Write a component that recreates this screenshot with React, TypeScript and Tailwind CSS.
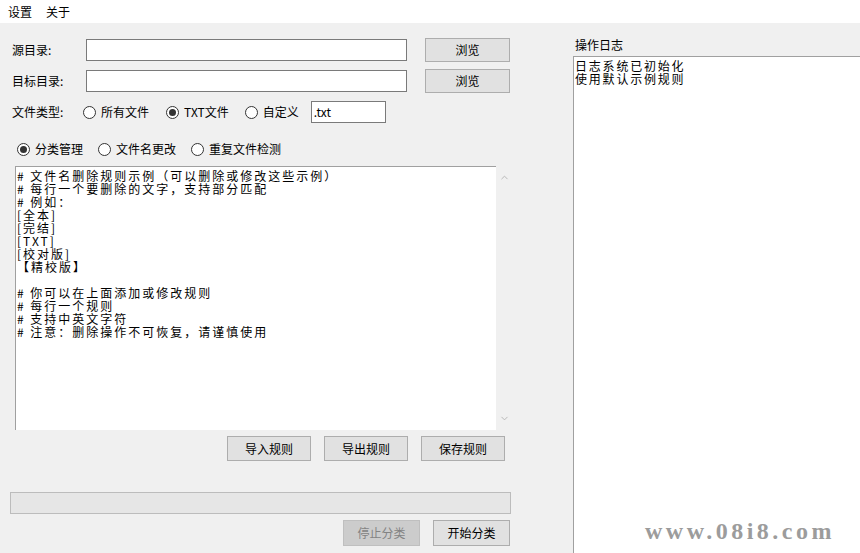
import { ChevronUp, ChevronDown } from "lucide-react";

const RULES = [
  "# 文件名删除规则示例（可以删除或修改这些示例）",
  "# 每行一个要删除的文字，支持部分匹配",
  "# 例如：",
  "[全本]",
  "[完结]",
  "[TXT]",
  "[校对版]",
  "【精校版】",
  "",
  "# 你可以在上面添加或修改规则",
  "# 每行一个规则",
  "# 支持中英文字符",
  "# 注意：删除操作不可恢复，请谨慎使用",
];

const LOGS = ["日志系统已初始化", "使用默认示例规则"];

const Radio = ({ checked, label }: { checked?: boolean; label: string }) => (
  <div className="flex items-center gap-[5px]">
    <span className="w-[13px] h-[13px] rounded-full border border-[#333] bg-white flex items-center justify-center">
      {checked && <span className="w-[7px] h-[7px] rounded-full bg-[#333]" />}
    </span>
    <span>{label}</span>
  </div>
);

const Btn = ({ label, className = "", disabled }: { label: string; className?: string; disabled?: boolean }) => (
  <button
    className={`flex items-center justify-center border ${
      disabled ? "bg-[#cccccc] border-[#bfbfbf] text-[#838383]" : "bg-[#e1e1e1] border-[#adadad] text-black"
    } ${className}`}
  >
    {label}
  </button>
);

export default function App() {
  return (
    <div className="relative w-[860px] h-[553px] overflow-hidden bg-[#f0f0f0] text-[12px] text-black font-['Noto_Sans_CJK_SC',sans-serif] leading-none">
      {/* Menu */}
      <div className="h-[23px] bg-white flex items-center pl-[8px] gap-[14px]">
        <span>设置</span>
        <span>关于</span>
      </div>

      <div className="flex">
        {/* Left panel */}
        <div className="w-[520px] flex flex-col">
          <div className="flex items-center mt-[15px]">
            <span className="w-[86px] pl-[12px]">源目录:</span>
            <div className="w-[321px] h-[22px] bg-white border border-[#7a7a7a]" />
            <Btn label="浏览" className="ml-[18px] w-[85px] h-[24px]" />
          </div>
          <div className="flex items-center mt-[7px]">
            <span className="w-[86px] pl-[12px]">目标目录:</span>
            <div className="w-[321px] h-[22px] bg-white border border-[#7a7a7a]" />
            <Btn label="浏览" className="ml-[18px] w-[85px] h-[24px]" />
          </div>
          <div className="flex items-center mt-[8px] h-[22px]">
            <span className="w-[83px] pl-[12px]">文件类型:</span>
            <Radio label="所有文件" />
            <div className="ml-[17px]">
              <Radio checked label="TXT文件" />
            </div>
            <div className="ml-[16px]">
              <Radio label="自定义" />
            </div>
            <div className="ml-[12px] w-[75px] h-[22px] bg-white border border-[#7a7a7a] flex items-center pl-[2px]">
              .txt
            </div>
          </div>
          <div className="flex items-center mt-[19px] ml-[17px] h-[14px]">
            <Radio checked label="分类管理" />
            <div className="ml-[15px]">
              <Radio label="文件名更改" />
            </div>
            <div className="ml-[15px]">
              <Radio label="重复文件检测" />
            </div>
          </div>

          {/* Rules editor */}
          <div className="flex mt-[10px] ml-[15px] h-[264px]">
            <div className="w-[481px] bg-white border-l border-t border-[#a0a0a0] pl-[1px] pt-[2px] text-[12px] tracking-[2px] leading-[13px]">
              {RULES.map((line, i) => (
                <div key={i} className="h-[13px] whitespace-pre">
                  {line}
                </div>
              ))}
            </div>
            <div className="w-[16px] flex flex-col justify-between items-center py-[6px] text-[#b4b4b4]">
              <ChevronUp size={11} strokeWidth={2} />
              <ChevronDown size={11} strokeWidth={2} />
            </div>
          </div>

          <div className="flex gap-[13px] mt-[6px] ml-[227px]">
            <Btn label="导入规则" className="w-[84px] h-[25px]" />
            <Btn label="导出规则" className="w-[84px] h-[25px]" />
            <Btn label="保存规则" className="w-[84px] h-[25px]" />
          </div>

          <div className="mt-[31px] ml-[10px] w-[501px] h-[22px] bg-[#e6e6e6] border border-[#bcbcbc]" />

          <div className="flex gap-[13px] mt-[6px] ml-[343px]">
            <Btn label="停止分类" disabled className="w-[77px] h-[26px]" />
            <Btn label="开始分类" className="w-[77px] h-[26px]" />
          </div>
        </div>

        {/* Log panel */}
        <div className="flex-1 flex flex-col ml-[53px]">
          <span className="mt-[16px] ml-[2px] h-[17px]">操作日志</span>
          <div className="h-[520px] bg-white border-l border-t border-[#a0a0a0] pl-[1px] pt-[2px] text-[12px] tracking-[1.8px] leading-[13px]">
            {LOGS.map((l, i) => (
              <div key={i} className="h-[13px]">
                {l}
              </div>
            ))}
          </div>
        </div>
      </div>

      <span className="absolute left-[645px] top-[519px] font-['Liberation_Serif',serif] font-bold text-[24px] tracking-[3.5px] text-[#9c9c9c]">
        www.08i8.com
      </span>
    </div>
  );
}
